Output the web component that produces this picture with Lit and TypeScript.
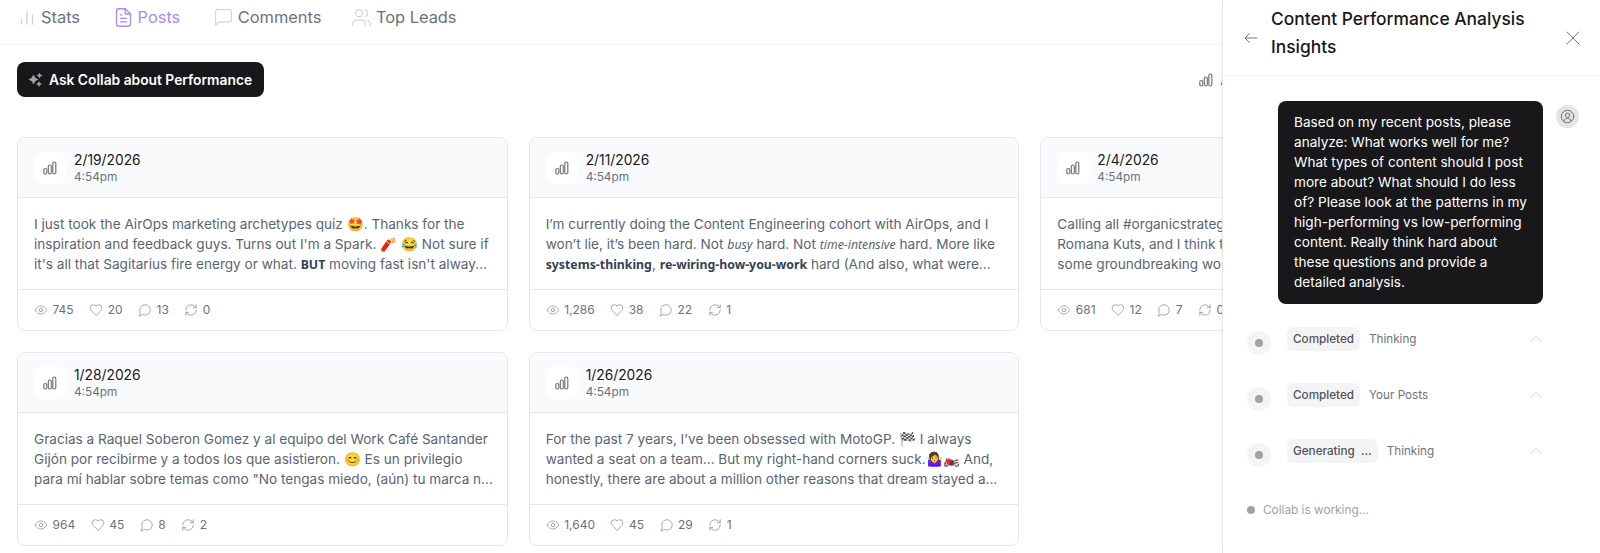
import {css, html, LitElement} from 'lit';
import {customElement} from 'lit/decorators.js';

const barsIcon = html`<svg viewBox="0 0 14 14" width="14" height="14" fill="none" stroke="currentColor" stroke-width="1.150">
    <rect x="0.8" y="7.5" width="3" height="5.5" rx="1.5"/>
    <rect x="5.3" y="4" width="3" height="9" rx="1.5"/>
    <rect x="9.8" y="1" width="3" height="12" rx="1.5"/>
</svg>`;

const eyeIcon = html`<svg viewBox="0 0 24 24" width="14" height="14" fill="none" stroke="currentColor" stroke-width="1.6" stroke-linecap="round" stroke-linejoin="round">
    <path d="M2 12s3.6-7 10-7 10 7 10 7-3.6 7-10 7-10-7-10-7Z"/><circle cx="12" cy="12" r="3"/>
</svg>`;
const heartIcon = html`<svg viewBox="0 0 24 24" width="14" height="14" fill="none" stroke="currentColor" stroke-width="1.6" stroke-linecap="round" stroke-linejoin="round">
    <path d="M19 14c1.500-1.500 3-3.200 3-5.500A5.500 5.500 0 0 0 16.500 3c-1.800 0-3 .5-4.500 2-1.500-1.500-2.700-2-4.500-2A5.500 5.500 0 0 0 2 8.500c0 2.300 1.500 4 3 5.500l7 7Z"/>
</svg>`;
const bubbleIcon = html`<svg viewBox="0 0 24 24" width="14" height="14" fill="none" stroke="currentColor" stroke-width="1.6" stroke-linecap="round" stroke-linejoin="round">
    <path d="M7.900 20A9 9 0 1 0 4 16.100L2 22Z"/>
</svg>`;
const repeatIcon = html`<svg viewBox="0 0 24 24" width="14" height="14" fill="none" stroke="currentColor" stroke-width="1.6" stroke-linecap="round" stroke-linejoin="round">
    <path d="M3 12a9 9 0 0 1 15-6.700L21 8"/><path d="M21 3v5h-5"/><path d="M21 12a9 9 0 0 1-15 6.700L3 16"/><path d="M8 16H3v5"/>
</svg>`;

const tabIcons = {
    stats: html`<svg viewBox="0 0 18 18" width="18" height="18" fill="none" stroke="currentColor" stroke-width="1.500" stroke-linecap="round">
        <path d="M3.500 16v-5M9 16V4M14.500 16V7"/></svg>`,
    posts: html`<svg viewBox="0 0 24 24" width="21" height="21" fill="none" stroke="currentColor" stroke-width="1.500" stroke-linecap="round" stroke-linejoin="round">
        <path d="M14 2H7a3 3 0 0 0-3 3v14a3 3 0 0 0 3 3h10a3 3 0 0 0 3-3V8Z"/><path d="M14 2v6h6"/><path d="M8.500 13h7M8.500 17h7M8.500 9h1.500"/></svg>`,
    comments: html`<svg viewBox="0 0 24 24" width="21" height="21" fill="none" stroke="currentColor" stroke-width="1.300" stroke-linecap="round" stroke-linejoin="round">
        <path d="M21 15a2 2 0 0 1-2 2H7l-4 4V5a2 2 0 0 1 2-2h14a2 2 0 0 1 2 2Z"/></svg>`,
    leads: html`<svg viewBox="0 0 24 24" width="21" height="21" fill="none" stroke="currentColor" stroke-width="1.300" stroke-linecap="round" stroke-linejoin="round">
        <path d="M16 21v-2a4 4 0 0 0-4-4H6a4 4 0 0 0-4 4v2"/><circle cx="9" cy="7" r="4"/><path d="M22 21v-2a4 4 0 0 0-3-3.900"/><path d="M16 3.100a4 4 0 0 1 0 7.800"/></svg>`,
};

const sparkIcon = html`<svg viewBox="0 0 15 15" width="15" height="15" fill="#a1a1aa">
    <path d="M5.500 2.500 7.300 5.700 10.500 7.500 7.300 9.300 5.500 12.500 3.700 9.300 .5 7.500 3.700 5.700Z"/>
    <path d="M11.500 .5 12.500 2.500 14.500 3.500 12.500 4.500 11.500 6.500 10.500 4.500 8.500 3.500 10.500 2.500Z"/>
    <path d="M11 9 12 11 14 12 12 13 11 15 10 13 8 12 10 11Z"/>
</svg>`;

interface Post {
    date: string;
    lines: unknown[];
    stats: string[];
}

const posts: Post[] = [
    {
        date: '2/19/2026',
        lines: [
            html`I just took the AirOps marketing archetypes quiz 🤩. Thanks for the`,
            html`inspiration and feedback guys. Turns out I'm a Spark. 🧨 😂 Not sure if`,
            html`it's all that Sagitarius fire energy or what. <b class="alt">BUT</b> moving fast isn't alway...`,
        ],
        stats: ['745', '20', '13', '0'],
    },
    {
        date: '2/11/2026',
        lines: [
            html`I’m currently doing the Content Engineering cohort with AirOps, and I`,
            html`won’t lie, it’s been hard. Not <i class="alt">busy</i> hard. Not <i class="alt">time-intensive</i> hard. More like`,
            html`<b class="alt">systems-thinking</b>, <b class="alt">re-wiring-how-you-work</b> hard (And also, what were...`,
        ],
        stats: ['1,286', '38', '22', '1'],
    },
    {
        // the rest of these lines sits behind the side panel
        date: '2/4/2026',
        lines: [
            html`Calling all #organicstrategists`,
            html`Romana Kuts, and I think that`,
            html`some groundbreaking work in`,
        ],
        stats: ['681', '12', '7', '0'],
    },
    {
        date: '1/28/2026',
        lines: [
            html`Gracias a Raquel Soberon Gomez y al equipo del Work Café Santander`,
            html`Gijón por recibirme y a todos los que asistieron. 😊 Es un privilegio`,
            html`para mí hablar sobre temas como "No tengas miedo, (aún) tu marca n...`,
        ],
        stats: ['964', '45', '8', '2'],
    },
    {
        date: '1/26/2026',
        lines: [
            html`For the past 7 years, I’ve been obsessed with MotoGP. 🏁 I always`,
            html`wanted a seat on a team... But my right-hand corners suck.🤷‍♀️🏍️ And,`,
            html`honestly, there are about a million other reasons that dream stayed a...`,
        ],
        stats: ['1,640', '45', '29', '1'],
    },
];

const steps = [
    {status: 'Completed', label: 'Thinking'},
    {status: 'Completed', label: 'Your Posts'},
    {status: 'Generating  ...', label: 'Thinking'},
];

@customElement('post-card')
export class PostCard extends LitElement {
    static properties = {post: {attribute: false}};
    declare post: Post;

    static styles = css`
        :host { display: block; }
        .card {
            height: 100%;
            box-sizing: border-box;
            background: white;
            border: 1px solid #e5e7eb;
            border-radius: 8px;
            overflow: hidden;
        }
        .head {
            display: flex;
            align-items: center;
            gap: 8px;
            height: 60px;
            box-sizing: border-box;
            padding: 0 16px;
            background: #f9fafb;
            border-bottom: 1px solid #e5e7eb;
        }
        .tile {
            display: flex;
            align-items: center;
            justify-content: center;
            width: 32px;
            height: 32px;
            background: white;
            border-radius: 8px;
            color: #6b7280;
        }
        .date { font-size: 13.8px; line-height: 18px; color: #18181b; }
        .time { font-size: 11.8px; line-height: 16px; color: #6b7280; }
        .body {
            padding: 16px 16px 15px;
            border-bottom: 1px solid #e5e7eb;
            font-size: 13.6px;
            line-height: 20px;
            color: #5b6472;
        }
        .line { white-space: nowrap; }
        .alt { font-family: "Noto Sans", sans-serif; font-size: 12.3px; line-height: 0; color: #334155; }
        i.alt { color: #5b6472; }
        .foot {
            display: flex;
            align-items: center;
            gap: 15.5px;
            height: 39px;
            padding: 0 16px;
            font-size: 12px;
            color: #6b7280;
        }
        .stat { display: flex; align-items: center; gap: 4.5px; }
        .stat svg { display: block; color: #9ca3af; }
    `;

    render() {
        const icons = [eyeIcon, heartIcon, bubbleIcon, repeatIcon];
        return html`
            <div class="card">
                <div class="head">
                    <div class="tile">${barsIcon}</div>
                    <div>
                        <div class="date">${this.post.date}</div>
                        <div class="time">4:54pm</div>
                    </div>
                </div>
                <div class="body">
                    ${this.post.lines.map((l) => html`<div class="line">${l}</div>`)}
                </div>
                <div class="foot">
                    ${this.post.stats.map((s, i) => html`<span class="stat">${icons[i]}${s}</span>`)}
                </div>
            </div>
        `;
    }
}

@customElement('app-root')
export class AppRoot extends LitElement {
    static styles = css`
        :host {
            display: block;
            position: relative;
            height: 553px;
            overflow: hidden;
            background: white;
            font-family: Inter, "Liberation Sans", sans-serif;
        }
        .tabs {
            display: flex;
            align-items: center;
            gap: 33px;
            height: 34px;
            padding: 0 0 10px 18px;
            border-bottom: 1px solid #f3f4f6;
            font-size: 16.4px;
            color: #6b7280;
        }
        .tab { display: flex; align-items: center; gap: 3.5px; }
        .tab svg { display: block; color: #d1d5db; }
        .tab:first-child { gap: 5px; }
        .tab:last-child { margin-left: -3px; }
        .tab.active, .tab.active svg { color: #a78bfa; }
        .toolbar {
            display: flex;
            align-items: center;
            justify-content: space-between;
            padding: 17px 0 0 17px;
            width: 1252px;
        }
        .ask {
            display: flex;
            align-items: center;
            gap: 6px;
            height: 35px;
            box-sizing: border-box;
            padding: 0 12px 0 11px;
            background: #18181b;
            border-radius: 8px;
            font: 600 13.8px Inter, sans-serif;
            color: white;
        }
        .range { display: flex; align-items: center; gap: 7px; font-size: 14px; color: #6b7280; }
        .grid {
            display: grid;
            grid-template-columns: repeat(3, 490.67px);
            grid-auto-rows: 194px;
            gap: 21px;
            padding: 40px 0 0 17px;
        }
        .panel {
            position: absolute;
            top: 0;
            right: 0;
            bottom: 0;
            width: 377px;
            background: white;
            border-left: 1px solid #e5e7eb;
            box-shadow: -2px 0 6px rgba(0, 0, 0, 0.03);
        }
        .panel-head {
            display: flex;
            align-items: center;
            height: 76px;
            box-sizing: border-box;
            padding: 0 18px 0 19px;
            border-bottom: 1px solid #f3f4f6;
        }
        .panel-head svg { display: block; flex: none; color: #71717a; }
        .title {
            flex: 1;
            margin: 0 0 10px 11px;
            font-size: 17.4px;
            font-weight: 500;
            line-height: 28px;
            color: #18181b;
        }
        .chat { padding: 25px 20px 0 55px; }
        .message { display: flex; align-items: flex-start; gap: 13px; }
        .bubble {
            width: 265px;
            box-sizing: border-box;
            padding: 11px 16px 12px;
            background: #18181b;
            border-radius: 8px;
            font-size: 13.6px;
            line-height: 20px;
            color: white;
        }
        .avatar {
            display: flex;
            align-items: center;
            justify-content: center;
            width: 23px;
            height: 23px;
            margin-top: 4px;
            background: #e4e4e7;
            border-radius: 50%;
            color: #71717a;
        }
        .steps { display: flex; flex-direction: column; gap: 32px; margin: 23px 0 0 -31px; width: 295px; }
        .step { display: flex; align-items: flex-start; height: 24px; font-size: 11.7px; }
        .step-dot {
            display: flex;
            align-items: center;
            justify-content: center;
            width: 24px;
            height: 24px;
            margin: 4px 16px 0 0;
            background: #f4f4f5;
            border-radius: 50%;
        }
        .step-dot::after, .working::before {
            content: "";
            width: 8px;
            height: 8px;
            background: #a1a1aa;
            border-radius: 50%;
        }
        .pill {
            padding: 0 6px;
            height: 24px;
            line-height: 24px;
            white-space: pre;
            background: #f4f4f5;
            border-radius: 6px;
            font-weight: 500;
            color: #52525b;
        }
        .label { flex: 1; margin-left: 9px; line-height: 24px; color: #71717a; }
        .chev { display: block; margin: 6px 0 0; color: #d4d4d8; }
        .working {
            display: flex;
            align-items: center;
            gap: 8px;
            margin: 40px 0 0 -31px;
            font-size: 11.8px;
            color: #a1a1aa;
        }
    `;

    render() {
        return html`
            <nav class="tabs">
                <span class="tab">${tabIcons.stats}Stats</span>
                <span class="tab active">${tabIcons.posts}Posts</span>
                <span class="tab">${tabIcons.comments}Comments</span>
                <span class="tab">${tabIcons.leads}Top Leads</span>
            </nav>
            <div class="toolbar">
                <div class="ask">${sparkIcon}Ask Collab about Performance</div>
                <div class="range">${barsIcon}All time</div>
            </div>
            <div class="grid">
                ${posts.map((p) => html`<post-card .post=${p}></post-card>`)}
            </div>
            <aside class="panel">
                <div class="panel-head">
                    <svg viewBox="0 0 24 24" width="18" height="18" fill="none" stroke="currentColor" stroke-width="1.300" stroke-linecap="round" stroke-linejoin="round"><path d="M20 12H4M10 6l-6 6 6 6"/></svg>
                    <div class="title">Content Performance Analysis Insights</div>
                    <svg viewBox="0 0 24 24" width="18" height="18" fill="none" stroke="currentColor" stroke-width="1.300" stroke-linecap="round"><path d="M4 4l16 16M20 4 4 20"/></svg>
                </div>
                <div class="chat">
                    <div class="message">
                        <div class="bubble">Based on my recent posts, please analyze: What works well for me? What types of content should I post more about? What should I do less of? Please look at the patterns in my high-performing vs low-performing content. Really think hard about these questions and provide a detailed analysis.</div>
                        <div class="avatar">
                            <svg viewBox="0 0 24 24" width="15" height="15" fill="none" stroke="currentColor" stroke-width="1.600" stroke-linecap="round"><circle cx="12" cy="12" r="10"/><circle cx="12" cy="10" r="3.500"/><path d="M6.500 19c1-3 3-4 5.500-4s4.500 1 5.500 4"/></svg>
                        </div>
                    </div>
                    <div class="steps">
                        ${steps.map((s) => html`
                            <div class="step">
                                <span class="step-dot"></span>
                                <span class="pill">${s.status}</span>
                                <span class="label">${s.label}</span>
                                <svg class="chev" viewBox="0 0 12 12" width="12" height="12" fill="none" stroke="currentColor" stroke-width="1"><path d="M0.500 8.500 6 3.500l5.500 5"/></svg>
                            </div>
                        `)}
                    </div>
                    <div class="working">Collab is working...</div>
                </div>
            </aside>
        `;
    }
}
